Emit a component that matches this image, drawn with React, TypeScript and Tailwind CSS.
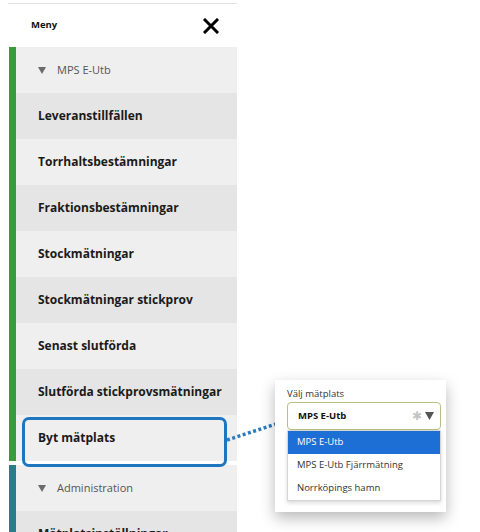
import React from 'react';

const menuItems = [
  'Leveranstillfällen',
  'Torrhaltsbestämningar',
  'Fraktionsbestämningar',
  'Stockmätningar',
  'Stockmätningar stickprov',
  'Senast slutförda',
  'Slutförda stickprovsmätningar',
];

const options = ['MPS E-Utb', 'MPS E-Utb Fjärrmätning', 'Norrköpings hamn'];

function Caret() {
  return (
    <svg width="8" height="7" viewBox="0 0 8 7" className="mr-[11px] shrink-0">
      <polygon points="0,0 8,0 4,7" fill="#6b6b6b" />
    </svg>
  );
}

function GroupRow({ label, light }: { label: string; light: boolean }) {
  return (
    <div
      className={`h-[46px] flex items-center pl-[22px] text-[11px] text-[#555] ${
        light ? 'bg-[#efefef]' : 'bg-[#e5e5e5]'
      }`}
    >
      <Caret />
      <span>{label}</span>
    </div>
  );
}

function MenuRow({ label, light }: { label: string; light: boolean }) {
  return (
    <div
      className={`h-[46px] flex items-center pl-[22px] text-[12px] font-bold text-[#1a1a1a] ${
        light ? 'bg-[#efefef]' : 'bg-[#e5e5e5]'
      }`}
    >
      {label}
    </div>
  );
}

export default function App() {
  return (
    <div
      className="relative w-[480px] h-[532px] overflow-hidden bg-white"
      style={{ fontFamily: '"Open Sans", "Liberation Sans", sans-serif' }}
    >
      <div className="ml-[8px] w-[229px]">
        <div className="h-[3px]" />
        <div className="h-[44px] border-t border-[#e3e3e3] flex items-center justify-between pl-[23px] pr-[18px]">
          <span className="text-[9.5px] font-bold text-[#111]">Meny</span>
          <svg width="16" height="16" viewBox="0 0 16 16">
            <path d="M2 2 L14 14 M14 2 L2 14" stroke="#000" strokeWidth="3" strokeLinecap="square" />
          </svg>
        </div>

        <div className="ml-[1px] border-l-[7px] border-[#3b9a3b]">
          <GroupRow label="MPS E-Utb" light />
          {menuItems.map((item, i) => (
            <MenuRow key={item} label={item} light={i % 2 === 1} />
          ))}
          <div className="relative">
            <MenuRow label="Byt mätplats" light />
            <div className="absolute left-[6px] right-[10px] top-[2px] bottom-[-6px] rounded-[7px] border-[3px] border-[#1e76bf]" />
          </div>
        </div>

        <div className="mt-[4px] ml-[1px] border-l-[7px] border-[#2b7b88]">
          <GroupRow label="Administration" light />
          <MenuRow label="Mätplatsinställningar" light={false} />
        </div>
      </div>

      {/* connector */}
      <svg className="absolute left-[226px] top-[420px]" width="52" height="24" viewBox="0 0 52 24">
        <line x1="1" y1="20" x2="50" y2="4" stroke="#2b7bbf" strokeWidth="3.5" strokeDasharray="3 2.5" />
      </svg>

      {/* callout */}
      <div className="absolute left-[275px] top-[380px] w-[171px] h-[132px] bg-white shadow-[0_6px_14px_rgba(0,0,0,0.28)]">
        <div className="pl-[12px] pt-[7px] text-[9.5px] text-[#333] leading-[13px]">Välj mätplats</div>
        <div className="ml-[12px] mt-[2px] w-[154px] h-[28px] rounded-[4px] border border-[#b9bf7e] flex items-center pl-[10px] pr-[6px]">
          <span className="text-[9.5px] font-bold text-[#111] flex-1">MPS E-Utb</span>
          <span className="text-[12px] text-[#c4c4c4] leading-none mr-[3px]">✱</span>
          <svg width="9" height="8" viewBox="0 0 9 8">
            <polygon points="0,0 9,0 4.5,8" fill="#555" />
          </svg>
        </div>
        <div className="ml-[12px] w-[154px] border border-[#d6d6d6] shadow-[0_2px_4px_rgba(0,0,0,0.15)]">
          {options.map((opt, i) => (
            <div
              key={opt}
              className={`h-[23px] flex items-center pl-[9px] text-[9.5px] ${
                i === 0 ? 'bg-[#1d6fd6] text-white' : 'bg-white text-[#333]'
              }`}
            >
              {opt}
            </div>
          ))}
        </div>
      </div>
    </div>
  );
}
